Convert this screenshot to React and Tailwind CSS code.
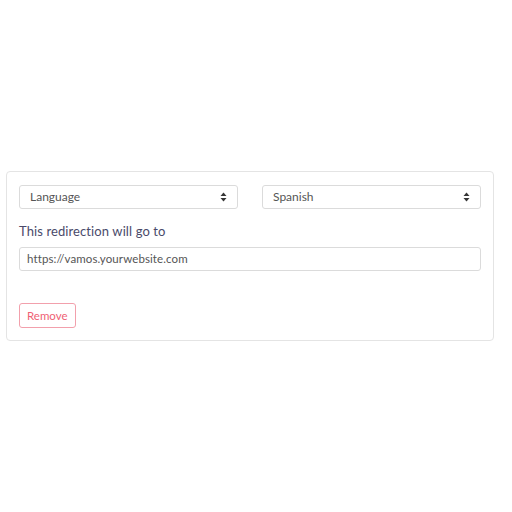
import React from "react";

const Chevrons = () => (
  <svg width="7" height="10" viewBox="0 0 7 10" className="shrink-0">
    <path d="M3.5 0.5L6.5 4H0.5z" fill="#363636" />
    <path d="M3.5 9.5L6.5 6H0.5z" fill="#363636" />
  </svg>
);

const Select = ({ label }) => (
  <div className="flex h-[24px] flex-1 items-center justify-between rounded-[3px] border border-[#dbdbdb] bg-white pl-[10px] pr-[10px] text-[12px] text-[#555555]">
    <span>{label}</span>
    <Chevrons />
  </div>
);

export default function App() {
  return (
    <div
      className="flex min-h-screen items-center bg-white"
      style={{ fontFamily: "Lato, 'Open Sans', sans-serif" }}
    >
      <div className="ml-[6px] w-[488px] rounded-[4px] border border-[#e4e4e4] bg-white px-[12px] pt-[13px] pb-[12px]">
        <div className="flex gap-[24px]">
          <Select label="Language" />
          <Select label="Spanish" />
        </div>
        <p className="mt-[14px] text-[13px] leading-[16px] text-[#4a4a6a] tracking-[0.1px]">
          This redirection will go to
        </p>
        <div className="mt-[8px] flex h-[24px] items-center rounded-[3px] border border-[#dbdbdb] px-[7px] text-[11.5px] text-[#555555] tracking-[0.1px]">
          https://vamos.yourwebsite.com
        </div>
        <button className="mt-[32px] h-[25px] rounded-[3px] border border-[#f2a0ac] px-[7px] text-[11.5px] text-[#ef5f74]">
          Remove
        </button>
      </div>
    </div>
  );
}
